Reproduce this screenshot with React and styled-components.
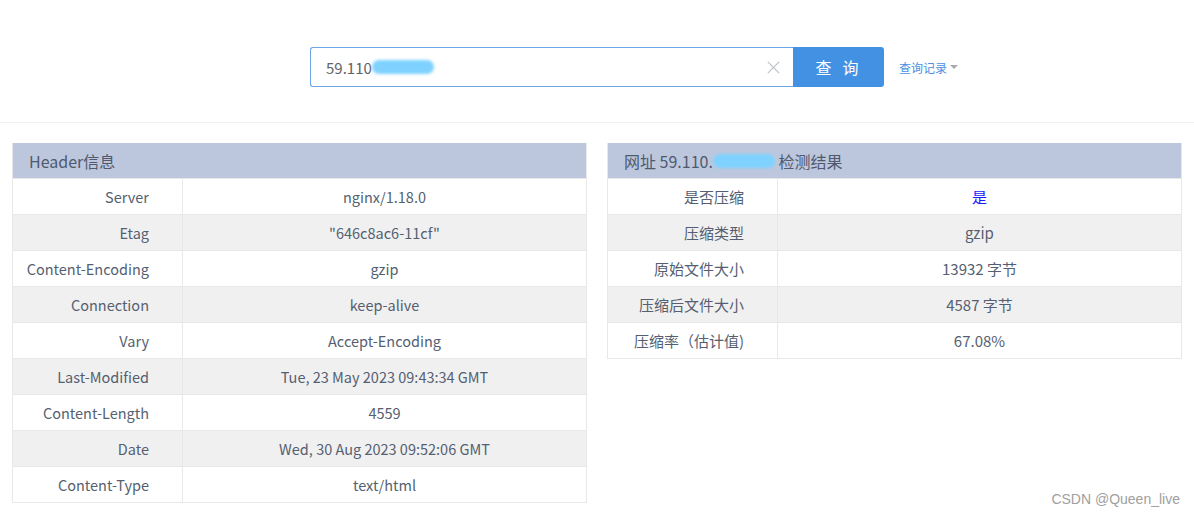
import React from 'react';
import styled, { createGlobalStyle } from 'styled-components';

const GlobalStyle = createGlobalStyle`
  body {
    margin: 0;
    background: #fff;
    font-family: "Noto Sans CJK SC", "Noto Sans", sans-serif;
  }
`

const Page = styled.div`
  position: relative;
  width: 1194px;
  height: 517px;
  overflow: hidden;
`

const SearchBar = styled.div`
  display: flex;
  align-items: flex-start;
  height: 123px;
  padding: 47px 0 0 310px;
  box-sizing: border-box;
  border-bottom: 1px solid #f0f0f0;
`

const InputBox = styled.div`
  display: flex;
  align-items: center;
  width: 483px;
  height: 40px;
  box-sizing: border-box;
  border: 1px solid #6aa6e8;
  border-right: none;
  border-radius: 3px 0 0 3px;
  padding: 0 12px 0 15px;
  font-size: 15px;
  color: #606266;
`

const InputText = styled.span`
  flex: 1;
  display: flex;
  align-items: center;
`

const Blur = styled.span`
  display: inline-block;
  width: ${p => p.w}px;
  height: 14px;
  background: #7fd2ff;
  border-radius: 8px;
  filter: blur(1.5px);
`

const SearchButton = styled.button`
  width: 91px;
  height: 40px;
  border: none;
  border-radius: 0 3px 3px 0;
  background: #4391e3;
  color: #fff;
  font-family: inherit;
  font-size: 16px;
  letter-spacing: 11px;
  padding-left: 14px;
`

const HistoryLink = styled.a`
  margin-left: 15px;
  height: 40px;
  font-size: 12px;
  color: #4a90e2;
  display: flex;
  align-items: center;
  gap: 3px;
`

const Caret = styled.span`
  width: 0;
  height: 0;
  border-left: 4px solid transparent;
  border-right: 4px solid transparent;
  border-top: 4px solid #aaa;
`

const Content = styled.div`
  display: grid;
  grid-template-columns: 575px 575px;
  gap: 20px;
  padding: 20px 13px 0 12px;
  height: 391px;
  border-bottom: 1px solid #f0f0f0;
`

const Table = styled.div`
  align-self: start;
  border: 1px solid #e8e8e8;
  border-top: none;
`

const Caption = styled.div`
  height: 35px;
  display: flex;
  align-items: center;
  padding-left: 16px;
  background: #bcc7de;
  color: #4f5a6e;
  font-size: 16px;
`

const Row = styled.div`
  display: grid;
  grid-template-columns: 170px 1fr;
  height: 36px;
  background: ${p => (p.alt ? '#f0f0f0' : '#fff')};
  border-top: 1px solid #e8e8e8;
  box-sizing: border-box;
  font-size: ${p => p.size || 14.5}px;
  color: #555f71;
`

const Label = styled.div`
  display: flex;
  align-items: center;
  justify-content: flex-end;
  padding-right: 33px;
  border-right: 1px solid #e8e8e8;
`

const Value = styled.div`
  display: flex;
  align-items: center;
  justify-content: center;
  color: ${p => p.color || 'inherit'};
`

const Watermark = styled.div`
  position: absolute;
  right: 14px;
  top: 491px;
  font-family: "Liberation Sans", Arial, sans-serif;
  font-size: 14px;
  color: #a0a0a0;
`

const headers = [
  ['Server', 'nginx/1.18.0'],
  ['Etag', '"646c8ac6-11cf"'],
  ['Content-Encoding', 'gzip'],
  ['Connection', 'keep-alive'],
  ['Vary', 'Accept-Encoding'],
  ['Last-Modified', 'Tue, 23 May 2023 09:43:34 GMT'],
  ['Content-Length', '4559'],
  ['Date', 'Wed, 30 Aug 2023 09:52:06 GMT'],
  ['Content-Type', 'text/html'],
]

const result = [
  ['是否压缩', '是', '#1a1aff'],
  ['压缩类型', 'gzip'],
  ['原始文件大小', '13932 字节'],
  ['压缩后文件大小', '4587 字节'],
  ['压缩率（估计值)', '67.08%'],
]

const App = () => {
  return (
    <Page>
      <GlobalStyle />
      <SearchBar>
        <InputBox>
          <InputText>59.110<Blur w={62} /></InputText>
          <svg width="15" height="15" viewBox="0 0 16 16">
            <path d="M2 2L14 14M14 2L2 14" stroke="#bfc3c9" strokeWidth="1.4" />
          </svg>
        </InputBox>
        <SearchButton>查询</SearchButton>
        <HistoryLink>查询记录<Caret /></HistoryLink>
      </SearchBar>
      <Content>
        <Table>
          <Caption>Header信息</Caption>
          {headers.map(([k, v], i) => (
            <Row key={k} alt={i % 2 === 1}>
              <Label>{k}</Label>
              <Value>{v}</Value>
            </Row>
          ))}
        </Table>
        <Table>
          <Caption>网址 59.110.<Blur w={62} />&nbsp;检测结果</Caption>
          {result.map(([k, v, c], i) => (
            <Row key={k} alt={i % 2 === 1} size={15}>
              <Label>{k}</Label>
              <Value color={c}>{v}</Value>
            </Row>
          ))}
        </Table>
      </Content>
      <Watermark>CSDN @Queen_live</Watermark>
    </Page>
  )
}

export default App
